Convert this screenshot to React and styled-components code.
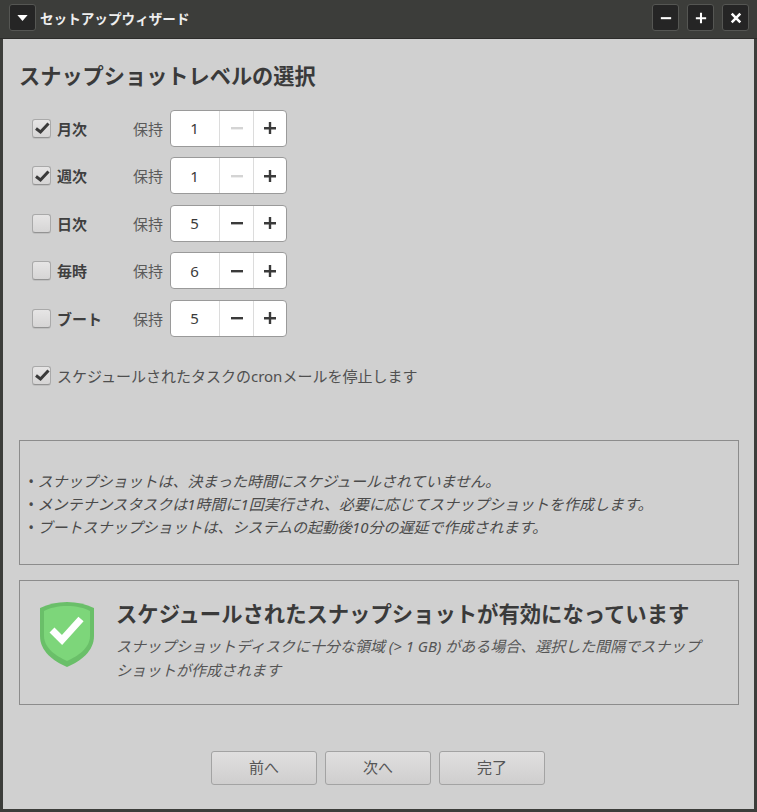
import React from "react";
import styled, { createGlobalStyle } from "styled-components";

const GlobalStyle = createGlobalStyle`
    html, body {
        margin: 0;
        padding: 0;
        background: #d0d0d0;
    }
`;

const Window = styled.div`
    width: 757px;
    height: 812px;
    box-sizing: border-box;
    display: flex;
    flex-direction: column;
    background: #d0d0d0;
    border-left: 3px solid #3c3d3a;
    border-right: 3px solid #3c3d3a;
    border-bottom: 3px solid #3c3d3a;
    font-family: "Noto Sans", "Noto Sans CJK JP", sans-serif;
    color: #3a3a3a;
`;

const TitleBar = styled.div`
    height: 39px;
    flex: none;
    margin: 0 -3px;
    padding: 4px 8px 0 9px;
    box-sizing: border-box;
    display: flex;
    align-items: flex-start;
    background: #3c3d3a;
    border-bottom: 1px solid #2c2c2a;
`;

const TitleButton = styled.div`
    width: 27px;
    height: 27px;
    box-sizing: border-box;
    display: flex;
    align-items: center;
    justify-content: center;
    background: #252525;
    border: 1px solid #555653;
    border-radius: 3px;
    margin-left: ${(p) => p.$gap || 0}px;
`;

const TitleText = styled.div`
    margin-left: 4px;
    height: 29px;
    line-height: 29px;
    font-size: 13.6px;
    font-weight: 700;
    color: #eeeeee;
    flex: 1;
`;

const Content = styled.div`
    flex: 1;
    display: flex;
    flex-direction: column;
    padding: 0 15px 0 16px;
`;

const Heading = styled.h1`
    margin: 24px 0 0 0;
    font-size: 21.2px;
    line-height: 26px;
    font-weight: 700;
    color: #3a3a3a;
`;

const Levels = styled.div`
    margin: 21px 0 0 13px;
    display: flex;
    flex-direction: column;
    gap: 11.5px;
`;

const Row = styled.div`
    height: 36px;
    display: flex;
    align-items: center;
`;

const CheckBox = styled.span`
    width: 19px;
    height: 19px;
    flex: none;
    box-sizing: border-box;
    display: flex;
    align-items: center;
    justify-content: center;
    background: linear-gradient(#e6e5e5, #d6d5d5);
    border: 1px solid #a9a9a9;
    border-bottom-color: #939393;
    border-radius: 3px;
    box-shadow: 0 1px 0 rgba(0, 0, 0, 0.08);
`;

const LevelLabel = styled.span`
    width: 76px;
    margin-left: 6px;
    font-size: 15px;
    font-weight: 700;
    color: #3f3f3f;
`;

const KeepLabel = styled.span`
    width: 37px;
    font-size: 15px;
    color: #5a5a5a;
`;

const Spinner = styled.div`
    width: 117px;
    height: 37px;
    box-sizing: border-box;
    display: flex;
    background: #ffffff;
    border: 1px solid #9a9a9a;
    border-radius: 4px;
`;

const SpinValue = styled.div`
    width: 48px;
    display: flex;
    align-items: center;
    justify-content: center;
    font-size: 15px;
    color: #3a3a3a;
    padding-right: 1px;
    box-sizing: border-box;
`;

const SpinButton = styled.div`
    width: ${(p) => p.$width}px;
    display: flex;
    align-items: center;
    justify-content: center;
    border-left: 1px solid #dcdcdc;
    box-sizing: border-box;
`;

const CronRow = styled.label`
    margin: 29px 0 0 13px;
    display: flex;
    align-items: center;
    gap: 6px;
    font-size: 15px;
    color: #4f4f4f;
    height: 20px;
`;

const Frame = styled.div`
    height: 125px;
    width: 720px;
    box-sizing: border-box;
    border: 1px solid #8c8c8c;
`;

const NotesFrame = styled(Frame)`
    margin-top: 55px;
    padding: 4px 8px 0;
    display: flex;
    flex-direction: column;
    justify-content: center;
`;

const Note = styled.div`
    font-size: 15px;
    line-height: 23px;
    font-style: italic;
    color: #4a4a4a;
`;

const StatusFrame = styled(Frame)`
    margin-top: 15px;
    padding: 0 28px 0 19px;
    display: flex;
    align-items: center;
    gap: 21px;
`;

const ShieldIcon = styled.svg`
    flex: none;
    margin-bottom: 15px;
`;

const StatusBody = styled.div`
    flex: 1;
    padding-bottom: 2px;
`;

const StatusTitle = styled.div`
    font-size: 21.33px;
    line-height: 26px;
    font-weight: 700;
    color: #3a3a3a;
`;

const StatusText = styled.div`
    margin-top: 7px;
    font-size: 15px;
    line-height: 24px;
    font-style: italic;
    color: #555555;
`;

const Footer = styled.div`
    margin-top: 46px;
    margin-left: 192px;
    display: flex;
    gap: 8px;
`;

const WizardButton = styled.button`
    width: 106px;
    height: 34px;
    padding: 0 0 3px 0;
    font: inherit;
    font-size: 15px;
    color: #555555;
    background: linear-gradient(#e0dfdf, #cfcece);
    border: 1px solid #a3a3a3;
    border-radius: 3px;
`;

const Tick = () => (
    <svg width="16" height="14" viewBox="0 0 16 14">
        <path d="M2 7.5 L6.5 11 L14.5 2.5" fill="none" stroke="#3a3a3a" strokeWidth="3" />
    </svg>
);

const Minus = ({ color, size = 14 }) => (
    <svg width={size} height={size} viewBox="0 0 14 14">
        <rect x="1" y="6" width="12" height="2.4" fill={color} />
    </svg>
);

const Plus = ({ color = "#3a3a3a", size = 14 }) => (
    <svg width={size} height={size} viewBox="0 0 14 14">
        <path d="M1 7.2 H13 M7 1 V13" stroke={color} strokeWidth="2.4" fill="none" />
    </svg>
);

const Shield = () => (
    <ShieldIcon width="56" height="66" viewBox="0 0 56 66">
        <path d="M28 0 C38 0 47 2 55 6 V34 C55 49 42 59 28 65 C14 59 1 49 1 34 V6 C9 2 18 0 28 0 Z" fill="#6abf69" />
        <path d="M28 4 C37 4 46 6 51 9 V34 C51 46 39 54 28 59 C17 54 5 46 5 34 V9 C10 6 19 4 28 4 Z" fill="#7dd67a" />
        <path d="M13 28 L23 38 L42 17" fill="none" stroke="#ffffff" strokeWidth="7" />
    </ShieldIcon>
);

const levels = [
    { name: "月次", keep: 1, checked: true },
    { name: "週次", keep: 1, checked: true },
    { name: "日次", keep: 5, checked: false },
    { name: "毎時", keep: 6, checked: false },
    { name: "ブート", keep: 5, checked: false },
];

export default function App() {
    return (
        <Window>
            <GlobalStyle />
            <TitleBar>
                <TitleButton>
                    <svg width="11" height="6" viewBox="0 0 12 7">
                        <path d="M0 0 H12 L6 7 Z" fill="#ffffff" />
                    </svg>
                </TitleButton>
                <TitleText>セットアップウィザード</TitleText>
                <TitleButton><Minus color="#ffffff" size={12} /></TitleButton>
                <TitleButton $gap={8}><Plus color="#ffffff" size={12} /></TitleButton>
                <TitleButton $gap={8}>
                    <svg width="12" height="12" viewBox="0 0 14 14">
                        <path d="M2 2 L12 12 M12 2 L2 12" stroke="#ffffff" strokeWidth="3" fill="none" />
                    </svg>
                </TitleButton>
            </TitleBar>
            <Content>
                <Heading>スナップショットレベルの選択</Heading>
                <Levels>
                    {levels.map((level) => (
                        <Row key={level.name}>
                            <CheckBox>{level.checked && <Tick />}</CheckBox>
                            <LevelLabel>{level.name}</LevelLabel>
                            <KeepLabel>保持</KeepLabel>
                            <Spinner>
                                <SpinValue>{level.keep}</SpinValue>
                                <SpinButton $width={34}>
                                    <Minus color={level.keep === 1 ? "#d4d4d4" : "#3a3a3a"} />
                                </SpinButton>
                                <SpinButton $width={33}><Plus /></SpinButton>
                            </Spinner>
                        </Row>
                    ))}
                </Levels>
                <CronRow>
                    <CheckBox><Tick /></CheckBox>
                    スケジュールされたタスクのcronメールを停止します
                </CronRow>
                <NotesFrame>
                    <Note>• スナップショットは、決まった時間にスケジュールされていません。</Note>
                    <Note>• メンテナンスタスクは1時間に1回実行され、必要に応じてスナップショットを作成します。</Note>
                    <Note>• ブートスナップショットは、システムの起動後10分の遅延で作成されます。</Note>
                </NotesFrame>
                <StatusFrame>
                    <Shield />
                    <StatusBody>
                        <StatusTitle>スケジュールされたスナップショットが有効になっています</StatusTitle>
                        <StatusText>スナップショットディスクに十分な領域 (&gt; 1 GB) がある場合、選択した間隔でスナップショットが作成されます</StatusText>
                    </StatusBody>
                </StatusFrame>
                <Footer>
                    <WizardButton>前へ</WizardButton>
                    <WizardButton>次へ</WizardButton>
                    <WizardButton>完了</WizardButton>
                </Footer>
            </Content>
        </Window>
    );
}
